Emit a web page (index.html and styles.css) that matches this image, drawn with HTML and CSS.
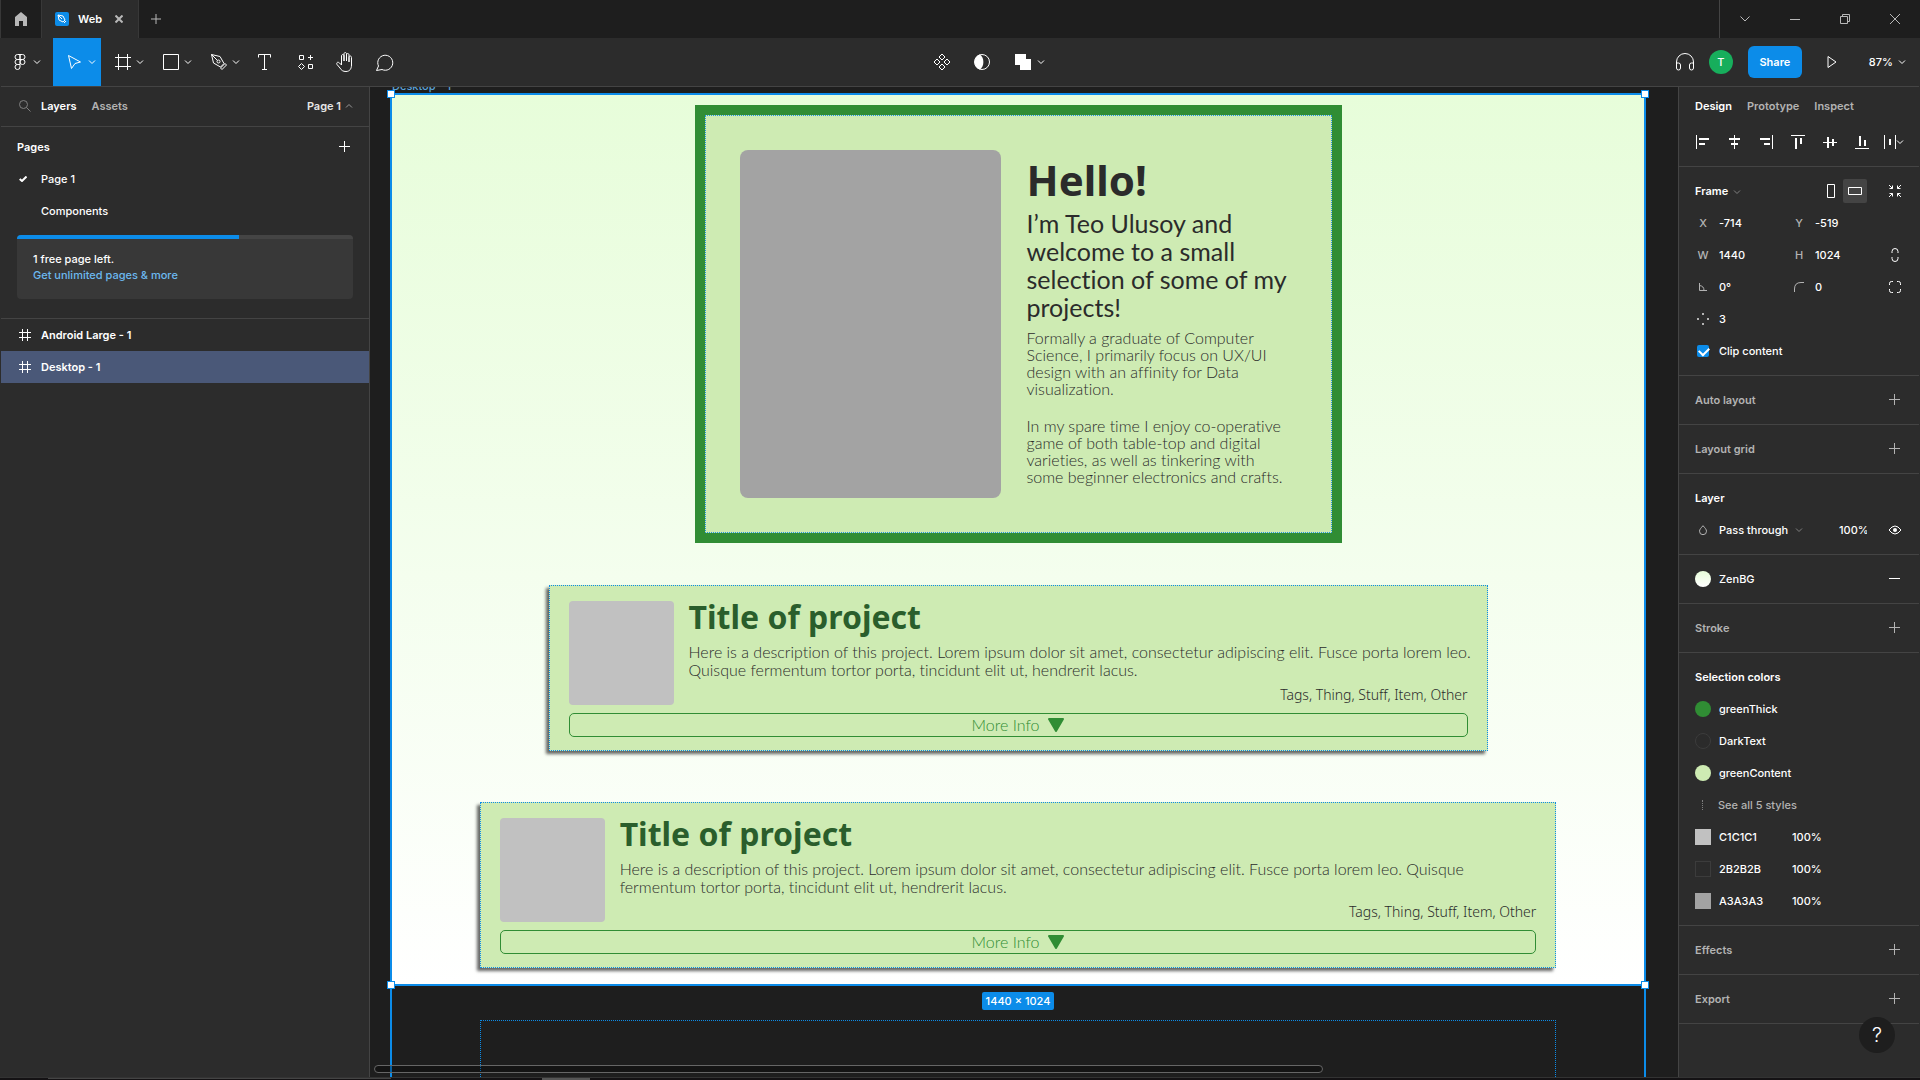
FILE: index.html
```html
<!DOCTYPE html>
<html lang="en">

<head>
	<meta charset="utf-8">
	<title>Web</title>
	<meta name="viewport" content="width=device-width, initial-scale=1">
	<link rel="stylesheet" href="styles.css">
</head>

<body>
	<!-- shared icons -->
	<svg class="sprite" aria-hidden="true">
		<symbol id="chevron" viewBox="0 0 8 8"><path d="M1 2.5l3 3 3-3" /></symbol>
		<symbol id="plus" viewBox="0 0 12 12"><path d="M5.5 0v11M0 5.5h11" /></symbol>
		<symbol id="frame" viewBox="0 0 16 16"><path d="M3.5 0v16M12.5 0v16M0 3.5h16M0 12.5h16" /></symbol>
		<symbol id="frame-small" viewBox="0 0 12 12"><path d="M3.5 0v12M8.5 0v12M0 3.5h12M0 8.5h12" /></symbol>
	</svg>

	<header class="titlebar">
		<button class="home" aria-label="Home">
			<svg class="fill" width="12" height="14" viewBox="0 0 12 14"><path d="M6 0l6 5v9H8V9H4v5H0V5z" /></svg>
		</button>
		<div class="tab">
			<svg class="tab-logo" width="14" height="14" viewBox="0 0 14 14">
				<rect width="14" height="14" rx="2" />
				<path d="M3 3l5 1 2 4-2 2-4-2zM3 3l4 4M9 11l2-2" />
			</svg>
			<span>Web</span>
			<button aria-label="Close tab"><svg class="thick-line" width="8" height="8" viewBox="0 0 8 8"><path d="M.5.5l7 7M7.500.5l-7 7" /></svg></button>
		</div>
		<button class="new-tab" aria-label="New tab"><svg width="10" height="10" viewBox="0 0 10 10"><path d="M5 0v10M0 5h10" /></svg></button>
		<div class="window-buttons">
			<button aria-label="Tabs"><svg width="10" height="6" viewBox="0 0 10 6"><path d="M.5.5L5 5 9.500.5" /></svg></button>
			<button aria-label="Minimize"><svg width="10" height="10" viewBox="0 0 10 10"><path d="M0 5.500h10" /></svg></button>
			<button aria-label="Restore"><svg width="10" height="10" viewBox="0 0 10 10"><path d="M.5 2.500h7v7h-7zM2.500 2.500v-2h7v7h-2" /></svg></button>
			<button aria-label="Close"><svg width="10" height="10" viewBox="0 0 10 10"><path d="M0 0l10 10M10 0L0 10" /></svg></button>
		</div>
	</header>

	<nav class="toolbar">
		<div class="tools">
			<button class="tool menu" aria-label="Main menu">
				<svg width="12" height="16" viewBox="0 0 12 16"><path d="M6 .5H3.500a2.500 2.500 0 0 0 0 5H6zM6 .5h2.500a2.500 2.500 0 0 1 0 5H6zM6 5.500H3.500a2.500 2.500 0 0 0 0 5H6zM8.500 5.500a2.500 2.500 0 1 1 0 5 2.500 2.500 0 0 1 0-5zM6 10.500H3.500A2.500 2.500 0 1 0 6 13z" /></svg>
				<svg class="chev" width="8" height="8"><use href="#chevron" /></svg>
			</button>
			<button class="tool wide active" aria-label="Move">
				<svg width="16" height="16" viewBox="0 0 16 16"><path d="M1.500 1.500l12 6.500-5.500 1.500L4.500 14.500z" /></svg>
				<svg class="chev" width="8" height="8"><use href="#chevron" /></svg>
			</button>
			<button class="tool wide" aria-label="Frame">
				<svg width="16" height="16"><use href="#frame" /></svg>
				<svg class="chev" width="8" height="8"><use href="#chevron" /></svg>
			</button>
			<button class="tool wide" aria-label="Rectangle">
				<svg width="16" height="16" viewBox="0 0 16 16"><path d="M.5.5h15v15H.5z" /></svg>
				<svg class="chev" width="8" height="8"><use href="#chevron" /></svg>
			</button>
			<button class="tool wide" aria-label="Pen">
				<svg width="16" height="16" viewBox="0 0 16 16"><path d="M.5.5l8.500 2 4 7-3.500 3.500-7-4zM.5.5l6 6M14 9.500l-4.500 4.500 1.500 1.500 4.500-4.500z" /><circle cx="7.500" cy="7.500" r="1.500" /></svg>
				<svg class="chev" width="8" height="8"><use href="#chevron" /></svg>
			</button>
			<button class="tool" aria-label="Text">
				<svg width="14" height="16" viewBox="0 0 14 16"><path d="M.5 3.500v-3h12v3M6.500.5v15M4 15.500h5" /></svg>
			</button>
			<button class="tool" aria-label="Resources">
				<svg width="16" height="16" viewBox="0 0 16 16"><path d="M2.500 1.500h4v4h-4zM11.500 10.500h4v4h-4zM13.500 1v5M11 3.500h5M4.500 9.500l3 3-3 3-3-3z" /></svg>
			</button>
			<button class="tool" aria-label="Hand">
				<svg width="18" height="20" viewBox="0 0 18 20"><path d="M5.500 11V4c0-2 2.500-2 2.500 0v5V2c0-2 2.500-2 2.500 0v7-6c0-2 2.500-2 2.500 0v7-4.500c0-2 2.500-2 2.500 0V13c0 4-2 6.500-5.500 6.500-3 0-4.500-1-6-3.500L1 12.500C0 10.500 2 9.500 3.500 11l2 2z" /></svg>
			</button>
			<button class="tool" aria-label="Comment">
				<svg width="18" height="17" viewBox="0 0 18 17"><path d="M.5 16.500l2-4.500A7.500 7.500 0 1 1 6 15.500z" /></svg>
			</button>
		</div>
		<div class="object-tools">
			<button class="tool" aria-label="Create component">
				<svg width="18" height="18" viewBox="0 0 18 18"><path d="M9 1l3 3-3 3-3-3zM9 11l3 3-3 3-3-3zM4 6l3 3-3 3-3-3zM14 6l3 3-3 3-3-3z" /></svg>
			</button>
			<button class="tool" aria-label="Mask">
				<svg width="16" height="16" viewBox="0 0 16 16"><circle cx="8" cy="8" r="7.500" /><path class="solid" d="M6 .5C-1 2-1 14 6 15.500 10.500 12 10.500 4 6 .5z" /></svg>
			</button>
			<button class="tool wide" aria-label="Union">
				<svg class="fill" width="16" height="16" viewBox="0 0 16 16"><path d="M0 0h11v5h5v11H5v-5H0z" /></svg>
				<svg class="chev" width="8" height="8"><use href="#chevron" /></svg>
			</button>
		</div>
		<div class="account">
			<button class="tool" aria-label="Audio">
				<svg width="18" height="18" viewBox="0 0 18 18"><path d="M.5 15V9a8.500 8.500 0 0 1 17 0v6M.5 10h2a2 2 0 0 1 2 2v3a2 2 0 0 1-4 0zM17.500 10h-2a2 2 0 0 0-2 2v3a2 2 0 0 0 4 0z" /></svg>
			</button>
			<span class="avatar">T</span>
			<button class="share">Share</button>
			<button class="play" aria-label="Present"><svg width="10" height="12" viewBox="0 0 10 12"><path d="M1 .5L9 6l-8 5.500z" /></svg></button>
			<button class="zoom">87% <svg width="8" height="8"><use href="#chevron" /></svg></button>
		</div>
	</nav>

	<div class="workspace">
		<aside class="left-panel">
			<div class="left-tabs">
				<svg class="search" width="12" height="12" viewBox="0 0 12 12"><circle cx="4.500" cy="4.500" r="4" /><path d="M7.500 7.500l4 4" /></svg>
				<button class="on">Layers</button>
				<button>Assets</button>
				<button class="page-switch">Page 1 <svg width="8" height="8"><use href="#chevron" /></svg></button>
			</div>
			<section class="pages">
				<div class="pages-head">
					<h2>Pages</h2>
					<button aria-label="Add page"><svg width="12" height="12"><use href="#plus" /></svg></button>
				</div>
				<a class="page" href="#"><svg width="8" height="6" viewBox="0 0 8 6"><path d="M.7 3l2.300 2L7.500.5" /></svg>Page 1</a>
				<a class="page" href="#">Components</a>
				<div class="upsell">
					<div class="meter"><div class="meter-fill" style="width: 66%"></div></div>
					<p>1 free page left.</p>
					<a href="#">Get unlimited pages &amp; more</a>
				</div>
			</section>
			<ul class="layers">
				<li><svg width="12" height="12"><use href="#frame-small" /></svg>Android Large - 1</li>
				<li class="selected"><svg width="12" height="12"><use href="#frame-small" /></svg>Desktop - 1</li>
			</ul>
		</aside>

		<main class="canvas">
			<span class="frame-name">Desktop - 1</span>
			<div class="selection">
				<div class="artboard">
					<article class="hero">
						<div class="portrait"></div>
						<div class="intro">
							<h1>Hello!</h1>
							<p class="lead">I’m Teo Ulusoy and<br>welcome to a small<br>selection of some of my<br>projects!</p>
							<p>Formally a graduate of Computer<br>Science, I primarily focus on UX/UI<br>design with an affinity for Data<br>visualization.</p>
							<p>In my spare time I enjoy co-operative<br>game of both table-top and digital<br>varieties, as well as tinkering with<br>some beginner electronics and crafts.</p>
						</div>
					</article>
					<article class="project">
						<div class="thumb"></div>
						<div class="details">
							<h2>Title of project</h2>
							<p>Here is a description of this project. Lorem ipsum dolor sit amet, consectetur adipiscing elit. Fusce porta lorem leo.<br>Quisque fermentum tortor porta, tincidunt elit ut, hendrerit lacus.</p>
							<span class="tags">Tags, Thing, Stuff, Item, Other</span>
						</div>
						<button class="more">More Info <svg width="16" height="14" viewBox="0 0 16 14"><path d="M1 1h14L8 13z" /></svg></button>
					</article>
					<article class="project large">
						<div class="thumb"></div>
						<div class="details">
							<h2>Title of project</h2>
							<p>Here is a description of this project. Lorem ipsum dolor sit amet, consectetur adipiscing elit. Fusce porta lorem leo. Quisque<br>fermentum tortor porta, tincidunt elit ut, hendrerit lacus.</p>
							<span class="tags">Tags, Thing, Stuff, Item, Other</span>
						</div>
						<button class="more">More Info <svg width="16" height="14" viewBox="0 0 16 14"><path d="M1 1h14L8 13z" /></svg></button>
					</article>
					<i class="handle tl"></i><i class="handle tr"></i><i class="handle bl"></i><i class="handle br"></i>
				</div>
				<span class="size">1440 × 1024</span>
				<div class="clipped"></div>
			</div>
			<div class="scrollbar"></div>
		</main>

		<aside class="right-panel">
			<div class="right-tabs">
				<button class="on">Design</button>
				<button>Prototype</button>
				<button>Inspect</button>
			</div>
			<div class="align">
				<button aria-label="Align left"><svg width="14" height="14" viewBox="0 0 14 14"><path d="M1.500 0v14" /><path class="bar" d="M4 4h10M4 9h6" /></svg></button>
				<button aria-label="Align horizontal centers"><svg width="12" height="14" viewBox="0 0 12 14"><path d="M6.500 0v14" /><path class="bar" d="M1 4h11M3 9h7" /></svg></button>
				<button aria-label="Align right"><svg width="14" height="14" viewBox="0 0 14 14"><path d="M13.500 0v14" /><path class="bar" d="M1 4h10M5 9h6" /></svg></button>
				<button aria-label="Align top"><svg width="14" height="14" viewBox="0 0 14 14"><path d="M0 .5h14" /><path class="bar" d="M5 3v11M10 3v6" /></svg></button>
				<button aria-label="Align vertical centers"><svg width="14" height="14" viewBox="0 0 14 14"><path d="M0 7.500h14" /><path class="bar" d="M5 2v11M10 4v7" /></svg></button>
				<button aria-label="Align bottom"><svg width="14" height="14" viewBox="0 0 14 14"><path d="M0 13.500h14" /><path class="bar" d="M5 1v10M10 5v6" /></svg></button>
				<button aria-label="Distribute"><svg width="12" height="14" viewBox="0 0 12 14"><path d="M.5 0v14M11.500 0v14" /><path class="bar" d="M6 4v6" /></svg><svg width="8" height="8"><use href="#chevron" /></svg></button>
			</div>

			<section>
				<div class="row frame-row">
					<h3>Frame <svg class="dim" width="8" height="8"><use href="#chevron" /></svg></h3>
					<button aria-label="Portrait"><svg width="8" height="14" viewBox="0 0 8 14"><path d="M.5.5h7v13h-7z" /></svg></button>
					<button class="pressed" aria-label="Landscape"><svg width="14" height="8" viewBox="0 0 14 8"><path d="M.5.5h13v7H.5z" /></svg></button>
					<button class="end" aria-label="Resize to fit"><svg width="14" height="14" viewBox="0 0 14 14"><path d="M1 1l3.500 3.500M1.500 4.500h3v-3M13 1L9.500 4.500M12.500 4.500h-3v-3M1 13l3.500-3.500M1.500 9.500h3v3M13 13L9.500 9.500M12.500 9.500h-3v3" /></svg></button>
				</div>
				<div class="row fields">
					<label for="x">X</label><input id="x" value="-714">
					<label for="y">Y</label><input id="y" value="-519">
				</div>
				<div class="row fields">
					<label for="w">W</label><input id="w" value="1440">
					<label for="h">H</label><input id="h" value="1024">
					<button aria-label="Constrain proportions"><svg width="8" height="14" viewBox="0 0 8 14"><path d="M1 5V3.500a3 3 0 0 1 6 0V5M1 9v1.500a3 3 0 0 0 6 0V9" /></svg></button>
				</div>
				<div class="row fields">
					<label for="angle" aria-label="Rotation"><svg width="8" height="8" viewBox="0 0 8 8"><path d="M.5 0v7.500H8M.5 2.500q4.500.5 4.500 5" /></svg></label><input id="angle" value="0°">
					<label for="radius" aria-label="Corner radius"><svg width="10" height="10" viewBox="0 0 10 10"><path d="M.5 10V7Q.5.5 7 .5h3" /></svg></label><input id="radius" value="0">
					<button aria-label="Independent corners"><svg width="12" height="12" viewBox="0 0 12 12"><path d="M.5 4V2.500a2 2 0 0 1 2-2H4M8 .5h1.500a2 2 0 0 1 2 2V4M11.500 8v1.500a2 2 0 0 1-2 2H8M4 11.500H2.500a2 2 0 0 1-2-2V8" /></svg></button>
				</div>
				<div class="row fields">
					<label for="count" aria-label="Count"><svg class="fill" width="12" height="12" viewBox="0 0 12 12"><path d="M5 0h2v2H5zM5 10h2v2H5zM0 5h2v2H0zM10 5h2v2h-2z" /></svg></label><input id="count" value="3">
				</div>
				<div class="row fields">
					<input type="checkbox" id="clip" checked><label class="text" for="clip">Clip content</label>
				</div>
			</section>

			<section>
				<div class="row"><h3 class="dim">Auto layout</h3><button class="dim" aria-label="Add auto layout"><svg width="12" height="12"><use href="#plus" /></svg></button></div>
			</section>
			<section>
				<div class="row"><h3 class="dim">Layout grid</h3><button class="dim" aria-label="Add layout grid"><svg width="12" height="12"><use href="#plus" /></svg></button></div>
			</section>

			<section>
				<div class="row"><h3>Layer</h3></div>
				<div class="row blend">
					<label for="blend" aria-label="Blend mode"><svg width="8" height="10" viewBox="0 0 8 10"><path d="M4 .7C2 3 .5 4.500.5 6.200a3.500 3.500 0 0 0 7 0C7.500 4.500 6 3 4 .7z" /></svg></label>
					<select id="blend"><option>Pass through</option></select>
					<svg class="dim" width="8" height="8"><use href="#chevron" /></svg>
					<input id="opacity" aria-label="Opacity" value="100%">
					<button aria-label="Toggle visibility"><svg width="14" height="10" viewBox="0 0 14 10"><path d="M1 5q6-8 12 0-6 8-12 0z" /><circle class="solid" cx="7" cy="5" r="2" /></svg></button>
				</div>
			</section>

			<section>
				<div class="row"><i class="swatch round zen"></i><span>ZenBG</span><button aria-label="Remove fill"><svg width="12" height="12" viewBox="0 0 12 12"><path d="M0 5.500h11" /></svg></button></div>
			</section>
			<section>
				<div class="row"><h3 class="dim">Stroke</h3><button class="dim" aria-label="Add stroke"><svg width="12" height="12"><use href="#plus" /></svg></button></div>
			</section>

			<section>
				<div class="row"><h3>Selection colors</h3></div>
				<div class="row"><i class="swatch round thick"></i><span>greenThick</span></div>
				<div class="row"><i class="swatch round dark"></i><span>DarkText</span></div>
				<div class="row"><i class="swatch round content"></i><span>greenContent</span></div>
				<div class="row"><i class="dots"></i><a href="#">See all 5 styles</a></div>
				<div class="row"><i class="swatch silver"></i><input class="hex" aria-label="Color 1" value="C1C1C1"><input class="percent" aria-label="Opacity 1" value="100%"></div>
				<div class="row"><i class="swatch dark"></i><input class="hex" aria-label="Color 2" value="2B2B2B"><input class="percent" aria-label="Opacity 2" value="100%"></div>
				<div class="row"><i class="swatch gray"></i><input class="hex" aria-label="Color 3" value="A3A3A3"><input class="percent" aria-label="Opacity 3" value="100%"></div>
			</section>

			<section>
				<div class="row"><h3 class="dim">Effects</h3><button class="dim" aria-label="Add effect"><svg width="12" height="12"><use href="#plus" /></svg></button></div>
			</section>
			<section>
				<div class="row"><h3 class="dim">Export</h3><button class="dim" aria-label="Add export"><svg width="12" height="12"><use href="#plus" /></svg></button></div>
			</section>
			<button class="help">?</button>
		</aside>
	</div>
	<footer class="dock"><i></i><b></b></footer>
</body>

</html>
```

FILE: styles.css
```css
* {
	box-sizing: border-box;
}

body {
	margin: 0;
	height: 100vh;
	display: flex;
	flex-direction: column;
	overflow: hidden;
	background: #2c2c2c;
	color: #fff;
	font: 500 11px/16px Inter, "Liberation Sans", sans-serif;
}

h1, h2, h3, p, ul {
	margin: 0;
	padding: 0;
}

h2, h3 {
	font-size: 11px;
	font-weight: 600;
}

button,
input,
select {
	margin: 0;
	padding: 0;
	border: 0;
	background: none;
	color: inherit;
	font: inherit;
}

button {
	display: flex;
	align-items: center;
	justify-content: center;
}

a {
	color: inherit;
	text-decoration: none;
}

svg {
	flex: none;
	fill: none;
	stroke: currentColor;
}

svg.fill,
.solid {
	fill: currentColor;
	stroke: none;
}

.sprite {
	position: absolute;
	width: 0;
	height: 0;
}

/* title bar */

.titlebar {
	flex: none;
	display: flex;
	height: 38px;
	background: #1e1e1e;
	color: #b8b8b8;
}

.home {
	width: 42px;
	border-right: 1px solid #383838;
	border-left: 1px solid #383838;
}

.tab {
	display: flex;
	align-items: center;
	width: 97px;
	padding-left: 13px;
	border-right: 1px solid #383838;
	background: #2c2c2c;
	color: #fff;
	font-weight: 600;
}

.tab span {
	flex: 1;
	padding-left: 9px;
}

.tab button {
	padding-right: 15px;
	color: #b8b8b8;
}

.thick-line {
	stroke-width: 2;
}

.tab-logo {
	stroke: #fff;
}

.tab-logo rect {
	fill: #0c8ce9;
	stroke: none;
}

.new-tab {
	width: 34px;
}

.window-buttons {
	display: flex;
	margin-left: auto;
	border-left: 1px solid #444;
}

.window-buttons button {
	width: 50px;
}

/* toolbar */

.toolbar {
	flex: none;
	display: grid;
	grid-template-columns: 1fr auto 1fr;
	height: 49px;
	margin: 0 1px;
	border-bottom: 1px solid #444;
}

.tools,
.object-tools,
.account {
	display: flex;
	align-items: center;
}

.tool {
	width: 40px;
	height: 48px;
}

.tool.wide {
	width: 48px;
	justify-content: flex-start;
	padding-left: 14px;
}

.tool.menu {
	width: 52px;
	justify-content: flex-start;
	padding-left: 13px;
}

.chev {
	margin-left: 5px;
}

.menu .chev {
	margin-left: 7px;
}

.tool.active {
	background: #0c8ce9;
}

.object-tools {
	padding-left: 52px;
}

.object-tools .wide {
	padding-left: 13px;
}

.object-tools .chev {
	margin-left: 6px;
}

.account {
	justify-content: flex-end;
}

.avatar {
	width: 24px;
	margin: 0 15px 0 4px;
	border-radius: 12px;
	background: #17ae5c;
	line-height: 24px;
	text-align: center;
}

.share {
	width: 54px;
	height: 32px;
	border-radius: 6px;
	background: #0c8ce9;
	font-weight: 600;
}

.play {
	width: 60px;
	height: 32px;
}

.zoom {
	gap: 5px;
	padding: 0 13px 0 7px;
}

/* panels */

.workspace {
	flex: 1;
	display: flex;
	min-height: 0;
	margin: 0 1px;
}

.left-panel {
	flex: none;
	width: 369px;
	border-right: 1px solid #444;
}

.left-tabs {
	display: flex;
	align-items: center;
	height: 40px;
	padding: 0 16px 2px 18px;
	border-bottom: 1px solid #444;
	color: #b3b3b3;
	font-weight: 600;
}

.left-tabs button {
	margin-right: 15px;
}

.left-tabs .on {
	color: #fff;
}

.left-tabs .page-switch {
	gap: 4px;
	margin: 0 0 0 auto;
	color: #e6e6e6;
}

.page-switch svg {
	transform: rotate(180deg);
	stroke: #999;
}

.search {
	margin-right: 10px;
	stroke: #808080;
}

.pages {
	padding: 4px 16px 19px;
	border-bottom: 1px solid #444;
}

.pages-head {
	display: flex;
	align-items: center;
	justify-content: space-between;
	height: 32px;
}

.pages-head button {
	width: 16px;
}

.page {
	display: flex;
	align-items: center;
	position: relative;
	height: 32px;
	padding-left: 24px;
}

.page svg {
	position: absolute;
	left: 2px;
	stroke-width: 2;
}

.upsell {
	height: 64px;
	margin-top: 8px;
	overflow: hidden;
	border-radius: 4px;
	background: #383838;
}

.upsell p {
	margin: 12px 16px 0;
}

.upsell a {
	margin-left: 16px;
	color: #6cb8f0;
}

.meter {
	background: #444;
}

.meter-fill {
	height: 4px;
	background: #0c8ce9;
}

.layers {
	list-style: none;
	font-weight: 600;
}

.layers li {
	display: flex;
	align-items: center;
	gap: 10px;
	height: 32px;
	padding-left: 18px;
}

.layers .selected {
	background: #4a5878;
}

/* canvas */

.canvas {
	flex: 1;
	position: relative;
	min-width: 0;
	overflow: hidden;
	padding: 6px 32px 0 20px;
	background: #1e1e1e;
	color: #2b2b2b;
}

.frame-name {
	position: absolute;
	top: -7px;
	left: 22px;
	color: #5ba3d9;
	line-height: 13px;
}

.selection {
	display: flex;
	flex-direction: column;
	align-items: center;
	height: 100%;
	border: solid #0c8ce9;
	border-width: 0 2px;
}

.artboard {
	flex: none;
	display: flex;
	flex-direction: column;
	align-items: center;
	position: relative;
	align-self: stretch;
	height: 893px;
	padding-top: 10px;
	border: solid #0c8ce9;
	border-width: 2px 0;
	background: linear-gradient(#e7fdda, #fff);
	font: 300 16px/17px Lato, "Noto Sans", sans-serif;
	font-variant-ligatures: none;
}

.handle {
	position: absolute;
	width: 8px;
	height: 8px;
	border: 1px solid #0c8ce9;
	background: #fff;
}

.tl, .tr {
	top: -5px;
}

.bl, .br {
	bottom: -5px;
}

.tl, .bl {
	left: -5px;
}

.tr, .br {
	right: -5px;
}

.hero {
	display: flex;
	gap: 26px;
	position: relative;
	width: 647px;
	height: 438px;
	padding: 35px;
	border: 10px solid #308d34;
	background: #ceebb3;
	outline: 1px dotted #1f97e0;
	outline-offset: -11px;
	white-space: nowrap;
}

.portrait {
	flex: none;
	width: 261px;
	height: 348px;
	border-radius: 8px;
	background: #a3a3a3;
}

.hero h1 {
	margin: 5px 0 4px;
	font: bold 42px/50px "Noto Sans", sans-serif;
}

.lead {
	margin-bottom: 8px;
	font-size: 25px;
	font-weight: 400;
	line-height: 28px;
}

.lead ~ p {
	margin-bottom: 20px;
}

.project {
	display: grid;
	grid-template-columns: 105px 1fr;
	grid-template-rows: 104px 24px;
	gap: 8px 15px;
	width: 75%;
	height: 166px;
	margin-top: 42px;
	padding: 15px 19px;
	border: 1px dotted #0c8ce9;
	background: #ceebb3;
	box-shadow: -3px 3px 3px rgba(0, 0, 0, 0.6);
	white-space: nowrap;
}

.project.large {
	width: 86%;
	margin-top: 51px;
}

.thumb {
	border-radius: 4px;
	background: #c1c1c1;
}

.details {
	display: flex;
	flex-direction: column;
	min-width: 0;
}

.details h2 {
	margin-bottom: 10px;
	color: #2a5e2c;
	font: bold 32px/32px "Noto Sans", sans-serif;
}

.details p {
	line-height: 18px;
}

.tags {
	margin-top: auto;
	text-align: right;
	font: 300 14px/20px "Noto Sans", sans-serif;
}

.more {
	grid-column: 1 / 3;
	gap: 9px;
	padding-bottom: 1px;
	border: 1px solid #308d34;
	border-radius: 5px;
	color: #308d34;
}

.more svg {
	fill: currentColor;
	stroke-linejoin: round;
	stroke-width: 2;
}

.size {
	margin-top: 6px;
	padding: 0 4px;
	border-radius: 2px;
	background: #0c8ce9;
	color: #fff;
	line-height: 18px;
}

.clipped {
	flex: 1;
	width: 86%;
	margin-top: 10px;
	border: 1px dotted #0c8ce9;
	border-bottom: 0;
}

.scrollbar {
	position: absolute;
	bottom: 4px;
	left: 4px;
	width: 949px;
	height: 8px;
	border: 1px solid #666;
	border-radius: 4px;
	background: rgba(0, 0, 0, 0.3);
}

/* design panel */

.right-panel {
	flex: none;
	position: relative;
	width: 241px;
	border-left: 1px solid #444;
}

.right-tabs {
	display: flex;
	gap: 15px;
	height: 38px;
	padding-left: 16px;
	color: #b3b3b3;
	font-weight: 600;
}

.right-tabs .on {
	color: #fff;
}

.align {
	display: flex;
	height: 42px;
	padding: 0 9px 8px 7px;
	border-bottom: 1px solid #444;
}

.align button {
	width: 32px;
}

.bar {
	stroke-width: 2;
}

.right-panel section {
	padding: 8px 0;
	border-bottom: 1px solid #444;
}

.row {
	display: flex;
	align-items: center;
	height: 32px;
	padding: 0 8px 0 16px;
}

.row > button {
	width: 32px;
	height: 24px;
	margin-left: auto;
}

.row h3.dim,
.row button.dim {
	color: #b3b3b3;
}

svg.dim {
	stroke: #808080;
}

.row h3 svg {
	margin-left: 2px;
	vertical-align: middle;
}

.frame-row > button {
	width: 24px;
	margin: 0;
	border-radius: 2px;
}

.frame-row h3 {
	flex: 1;
}

.frame-row .pressed {
	background: #444;
}

.frame-row .end {
	width: 32px;
	margin-left: 12px;
}

.fields {
	display: grid;
	grid-template-columns: 16px 80px 16px 1fr 32px;
}

.row label {
	display: flex;
	justify-content: center;
	width: 16px;
	color: #b3b3b3;
}

.row label.text {
	width: auto;
	margin-left: 8px;
	justify-content: flex-start;
	color: #fff;
}

.fields input {
	min-width: 0;
	padding-left: 8px;
}

.fields input[type=checkbox] {
	appearance: none;
	width: 12px;
	height: 12px;
	margin: 0 2px;
	padding: 0;
	border-radius: 2px;
	background: #0c8ce9;
}

.fields input[type=checkbox]:checked::after {
	content: "";
	display: block;
	width: 8px;
	height: 5px;
	margin: 2px;
	border: solid #fff;
	border-width: 0 0 2px 2px;
	transform: rotate(-45deg);
}

.blend select {
	appearance: none;
	margin: 0 6px 0 8px;
}

#opacity {
	width: 28px;
	margin-left: auto;
}

.blend > button {
	margin-left: 12px;
}

.swatch {
	width: 16px;
	height: 16px;
	margin-right: 8px;
}

.round {
	border-radius: 50%;
}

.zen {
	background: linear-gradient(#e7fdda, #fff);
}

.thick {
	background: #308d34;
}

.dark {
	border: 1px solid #3c3c3c;
	background: #2b2b2b;
}

.content {
	background: #ceebb3;
}

.silver {
	background: #c1c1c1;
}

.gray {
	background: #a3a3a3;
}

.dots {
	height: 10px;
	margin: 0 15px 0 7px;
	border-left: 1px dotted #808080;
}

.dots + a {
	color: #b3b3b3;
}

.hex {
	width: 73px;
}

.percent {
	width: 40px;
}

.help {
	position: absolute;
	right: 24px;
	bottom: 24px;
	width: 36px;
	height: 36px;
	border-radius: 50%;
	background: #1e1e1e;
	font-size: 20px;
	font-weight: 300;
}

.dock {
	flex: none;
	display: flex;
	height: 3px;
	padding-left: 48px;
	border-top: 1px solid #333;
	background: #141214;
}

.dock i {
	width: 343px;
	height: 1px;
	background: #444;
}

.dock b {
	width: 48px;
	margin-left: 151px;
	background: #555;
}
```
